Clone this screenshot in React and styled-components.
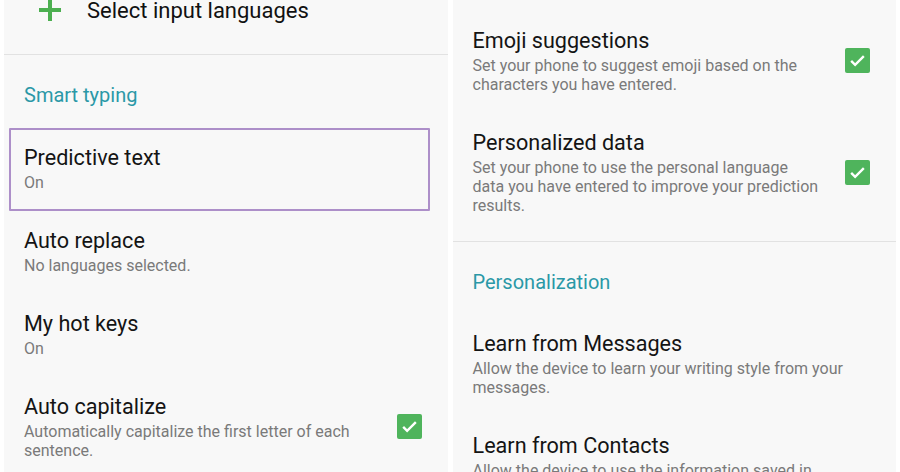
import React from 'react';
import styled, { createGlobalStyle } from 'styled-components';

const GlobalStyle = createGlobalStyle`
  html, body {
    margin: 0;
    padding: 0;
    background: #ffffff;
  }
  body {
    font-family: Roboto, 'Noto Sans', sans-serif;
  }
`;

const Screen = styled.div`
  display: flex;
  gap: 5px;
  padding: 0 4px;
  height: 472px;
  overflow: hidden;
`;

const Panel = styled.div`
  flex: 1;
  background: #f8f8f8;
  overflow: hidden;
  display: flex;
  flex-direction: column;
  padding-top: ${p => p.top || 0}px;
`;

const Section = styled.div`
  padding-bottom: ${p => p.tail || 0}px;
  border-bottom: ${p => (p.divided ? '1px solid #e2e2e2' : 'none')};
`;

const AddRow = styled.div`
  display: flex;
  align-items: center;
  gap: 25px;
  padding: 0 34px;
  height: 20px;
  font-size: 22px;
  color: #111;
  margin-bottom: 34px;
`;

const Header = styled.div`
  padding: 28px 20px ${p => p.bottom || 20}px;
  line-height: 24px;
  font-size: 20px;
  color: #2b98a7;
`;

const Row = styled.div`
  position: relative;
  display: flex;
  align-items: center;
  gap: 20px;
  padding: 16px 26px 19px 20px;
`;

const Focus = styled.div`
  position: absolute;
  inset: 0 18px 0 5px;
  border: 2px solid #ad8fc9;
  border-radius: 1px;
  pointer-events: none;
`;

const Texts = styled.div`
  flex: 1;
  display: flex;
  flex-direction: column;
  gap: 1px;
`;

const Title = styled.div`
  font-size: 21.6px;
  line-height: 28px;
  color: #141414;
`;

const Sub = styled.div`
  font-size: 16px;
  line-height: 19px;
  color: #7a7a7a;
  max-width: ${p => p.wrap || 360}px;
`;

const Check = styled.div`
  width: 25px;
  height: 25px;
  border-radius: 2px;
  background: #4fb45c;
  display: flex;
  align-items: center;
  justify-content: center;
  flex-shrink: 0;
`;

const CheckBox = () => (
  <Check>
    <svg width="19" height="19" viewBox="0 0 24 24">
      <path d="M4 12.5l5 5L20 6.5" fill="none" stroke="#fff" strokeWidth="3" />
    </svg>
  </Check>
);

const Plus = () => (
  <svg width="24" height="24" viewBox="0 0 24 24">
    <path d="M12 1v22M1 12h22" stroke="#4caf50" strokeWidth="4" />
  </svg>
);

const Item = ({ title, sub, checked, focused, wrap }) => (
  <Row>
    {focused && <Focus />}
    <Texts>
      <Title>{title}</Title>
      {sub && (
        <Sub wrap={wrap}>
          {Array.isArray(sub)
            ? sub.map((line, i) => (
                <React.Fragment key={i}>
                  {i > 0 && <br />}
                  {line}
                </React.Fragment>
              ))
            : sub}
        </Sub>
      )}
    </Texts>
    {checked && <CheckBox />}
  </Row>
);

const App = () => (
  <>
    <GlobalStyle />
    <Screen>
      <Panel>
        <Section divided>
          <AddRow>
            <Plus />
            <span>Select input languages</span>
          </AddRow>
        </Section>
        <Header bottom={21}>Smart typing</Header>
        <Item title="Predictive text" sub="On" focused />
        <Item title="Auto replace" sub="No languages selected." />
        <Item title="My hot keys" sub="On" />
        <Item
          title="Auto capitalize"
          sub="Automatically capitalize the first letter of each sentence."
          checked
          wrap={345}
        />
      </Panel>
      <Panel top={11}>
        <Section divided tail={7}>
          <Item
            title="Emoji suggestions"
            sub="Set your phone to suggest emoji based on the characters you have entered."
            checked
            wrap={345}
          />
          <Item
            title="Personalized data"
            sub={[
              'Set your phone to use the personal language',
              'data you have entered to improve your prediction',
              'results.',
            ]}
            checked
            wrap={380}
          />
        </Section>
        <Header>Personalization</Header>
        <Item
          title="Learn from Messages"
          sub="Allow the device to learn your writing style from your messages."
          wrap={385}
        />
        <Item
          title="Learn from Contacts"
          sub="Allow the device to use the information saved in your contacts."
          wrap={350}
        />
      </Panel>
    </Screen>
  </>
);

export default App;
